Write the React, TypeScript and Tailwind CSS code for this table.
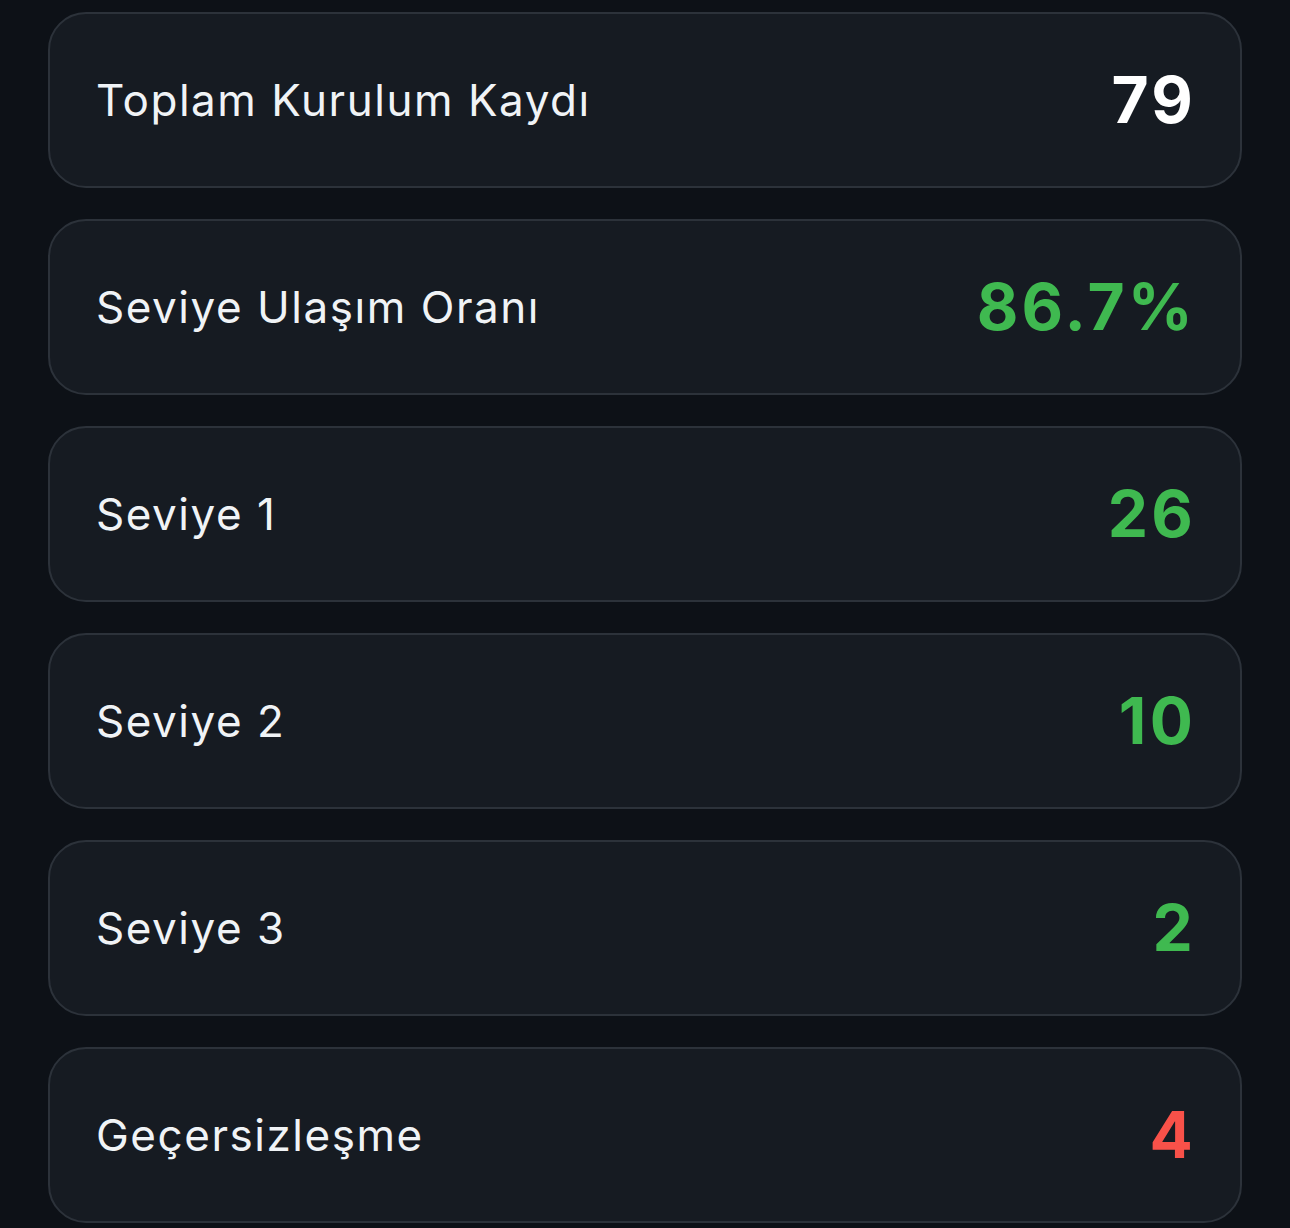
const rows: Array<{ label: string; value: string; tone: "white" | "green" | "red" }> = [
  { label: "Toplam Kurulum Kaydı", value: "79", tone: "white" },
  { label: "Seviye Ulaşım Oranı", value: "86.7%", tone: "green" },
  { label: "Seviye 1", value: "26", tone: "green" },
  { label: "Seviye 2", value: "10", tone: "green" },
  { label: "Seviye 3", value: "2", tone: "green" },
  { label: "Geçersizleşme", value: "4", tone: "red" },
];

const TONES = {
  white: "text-white",
  green: "text-[#3fb950]",
  red: "text-[#f85149]",
};

export default function App() {
  return (
    <div
      className="min-h-[1228px] bg-[#0d1117] px-[48px] pt-[12px]"
      style={{ fontFamily: "Inter, 'Noto Sans', sans-serif" }}
    >
      <div className="flex flex-col gap-[31px]">
        {rows.map((row) => (
          <div
            key={row.label}
            className="flex h-[176px] items-center justify-between rounded-[38px] border-2 border-[#2c323a] bg-[#161b22] pl-[46px] pr-[48px]"
          >
            <span className="text-[44px] tracking-[0.035em] text-[#f0f3f6]">
              {row.label}
            </span>
            <span
              className={`text-[64px] font-bold tracking-[0.05em] -mr-[4px] ${TONES[row.tone]}`}
            >
              {row.value}
            </span>
          </div>
        ))}
      </div>
    </div>
  );
}
